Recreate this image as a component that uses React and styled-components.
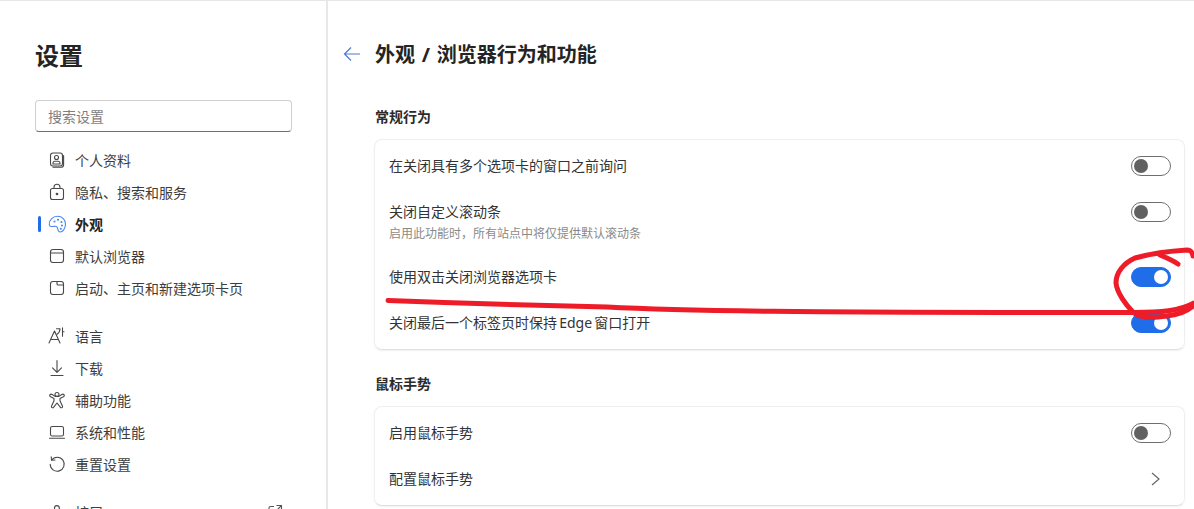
import React from "react";
import styled, { createGlobalStyle } from "styled-components";

const GlobalStyle = createGlobalStyle`
  html, body {
    margin: 0;
    height: 100%;
    overflow: hidden;
    background: #fff;
  }
  body {
    font-family: "Noto Sans", "Noto Sans CJK SC", sans-serif;
    color: #262626;
  }
`;

const Page = styled.div`
  position: relative;
  display: flex;
  height: 509px;
  overflow: hidden;
  border-top: 1px solid #e6e6e6;
  box-sizing: border-box;
`;

const Sidebar = styled.aside`
  flex: 0 0 328px;
  box-sizing: border-box;
  padding: 39px 34px 0 35px;
  border-right: 2px solid #e8e8e8;
`;

const SideTitle = styled.h1`
  margin: 0 0 28px;
  font-size: 24px;
  line-height: 32px;
  font-weight: 700;
  color: #242424;
`;

const Search = styled.input`
  display: block;
  width: 100%;
  height: 32px;
  box-sizing: border-box;
  margin-bottom: 12px;
  padding: 0 12px;
  border: 1px solid #cfcfcf;
  border-bottom-color: #6e6e6e;
  border-radius: 4px;
  outline: none;
  font: inherit;
  font-size: 14px;
  &::placeholder {
    color: #7f7f7f;
    opacity: 1;
  }
`;

const NavGroup = styled.nav`
  margin-bottom: 16px;
`;

const NavRow = styled.div`
  position: relative;
  display: flex;
  align-items: center;
  gap: 8px;
  height: 32px;
  padding-left: 12px;
  font-size: 14px;
  font-weight: ${(p) => (p.$active ? 700 : 400)};
  color: ${(p) => (p.$active ? "#242424" : "#3d3d3d")};
  svg {
    flex: none;
    color: ${(p) => (p.$active ? "#4d88ea" : "#484848")};
  }
`;

const Marker = styled.span`
  position: absolute;
  left: 3px;
  top: 8px;
  width: 3px;
  height: 16px;
  border-radius: 2px;
  background: #1f6de8;
`;

const NavTail = styled.span`
  margin-left: auto;
  margin-right: 9px;
  display: flex;
`;

const Main = styled.main`
  flex: 1;
  min-width: 0;
  padding: 39px 9px 0 15px;
`;

const Header = styled.header`
  display: flex;
  align-items: center;
  gap: 14px;
  height: 28px;
  margin-bottom: 39px;
  color: #4d78d6;
`;

const PageTitle = styled.h2`
  margin: 0;
  padding-top: 2px;
  font-size: 20px;
  line-height: 28px;
  font-weight: 700;
  word-spacing: 1.5px;
  color: #242424;
`;

const Content = styled.div`
  margin-left: 32px;
`;

const SectionTitle = styled.h3`
  margin: 0 0 12px;
  font-size: 14px;
  line-height: 20px;
  font-weight: 700;
  color: #2b2b2b;
`;

const Card = styled.section`
  box-sizing: border-box;
  margin: 0 0 24px -1px;
  padding: 3px 0;
  border: 1px solid #efefef;
  border-bottom-color: #e0e0e0;
  border-radius: 8px;
  box-shadow: 0 1px 2px rgba(0, 0, 0, 0.06);
`;

const Row = styled.div`
  display: flex;
  align-items: center;
  justify-content: space-between;
  box-sizing: border-box;
  height: 46px;
  padding: 0 13px 0 14px;
`;

const TallRow = styled(Row)`
  align-items: flex-start;
  height: 65px;
  padding-top: 13px;
`;

const RowText = styled.div`
  display: flex;
  flex-direction: column;
  gap: 4px;
`;

const Label = styled.div`
  font-size: 14px;
  line-height: 20px;
  word-spacing: -1.5px;
  color: #333;
`;

const Hint = styled.div`
  font-size: 12px;
  line-height: 16px;
  color: #8a8a8a;
`;

const Toggle = styled.span`
  display: flex;
  align-items: center;
  justify-content: ${(p) => (p.$on ? "flex-end" : "flex-start")};
  box-sizing: border-box;
  width: 40px;
  height: 20px;
  padding: 0 2px;
  border: 1px solid ${(p) => (p.$on ? "#1f6de8" : "#6e6e6e")};
  border-radius: 10px;
  background: ${(p) => (p.$on ? "#1f6de8" : "#fff")};
  &::after {
    content: "";
    width: 14px;
    height: 14px;
    border-radius: 50%;
    background: ${(p) => (p.$on ? "#fff" : "#616161")};
  }
`;

const Chevron = styled.svg`
  margin-right: 8px;
`;

const Ink = styled.svg`
  position: absolute;
  left: 0;
  top: -1px;
  pointer-events: none;
`;

const Icon = ({ children, size = 20 }) => (
  <svg
    width={size}
    height={size}
    viewBox="0 0 20 20"
    fill="none"
    stroke="currentColor"
    strokeWidth="1.1"
    strokeLinecap="round"
    strokeLinejoin="round"
  >
    {children}
  </svg>
);

const icons = {
  profile: (
    <>
      <rect x="3.5" y="3" width="12" height="13" rx="2.5" />
      <path d="M16.6 5.5v9.2a2.6 2.6 0 0 1-2.6 2.6H6" />
      <circle cx="9.5" cy="7.5" r="2" />
      <path d="M6 13.2c0-1.4 1-2 2-2h3c1 0 2 .6 2 2v.8H6z" />
    </>
  ),
  lock: (
    <>
      <rect x="3.5" y="6.5" width="13" height="11" rx="2" />
      <path d="M7 6.5V5.2a3 3 0 0 1 6 0v1.3" />
      <circle cx="10" cy="12" r=".8" fill="currentColor" />
    </>
  ),
  palette: (
    <>
      <path d="M2.2 10.500C2 6.200 5.600 2.300 10.500 2.300c4.800 0 8 3.400 8 7.700 0 4.400-2.700 8-5.200 8-1.900 0-2.400-1.500-2.600-3.200-.2-1.800-1-2.700-2.800-2.500-2.500.3-5.500.9-5.700-1.800z" />
      <circle cx="7.500" cy="7.500" r=".5" fill="currentColor" />
      <circle cx="11" cy="5.800" r=".5" fill="currentColor" />
      <circle cx="14.500" cy="8" r=".5" fill="currentColor" />
      <circle cx="15" cy="11.500" r=".5" fill="currentColor" />
      <circle cx="13.800" cy="14.800" r=".5" fill="currentColor" />
    </>
  ),
  window: (
    <>
      <rect x="3.5" y="3.5" width="13" height="13" rx="2.5" />
      <path d="M3.5 7h13" />
    </>
  ),
  tab: (
    <>
      <rect x="3.5" y="3.5" width="13" height="13" rx="2.5" />
      <path d="M10 3.5v2.2c0 .8.5 1.3 1.3 1.3h5.2" />
    </>
  ),
  language: (
    <>
      <path d="M2 17 7.500 5 13 17M3.800 13.500h7.400" />
      <path d="M9.500 2.800h3.500c0 2.600-1 4.200-3 5.400M15.500 1.800v8.400M15.500 5.800h1.500" />
    </>
  ),
  download: <path d="M10 2.500V14M5.500 9.800 10 14.300l4.500-4.500M4 17.500h12" />,
  access: (
    <>
      <circle cx="10" cy="4.500" r="2" />
      <path d="M3.200 4.500c-.8.8-.5 1.800.4 2.300L7 8.500v2.200L4.600 16c-.4 1 .1 1.700.9 1.800.6.1 1.100-.3 1.400-.9L10 13l3.100 3.900c.3.600.8 1 1.400.9.8-.1 1.300-.8.9-1.800L13 10.700V8.500l3.400-1.700c.9-.5 1.200-1.500.4-2.300-.6-.6-1.400-.4-2 0L12 6.400H8L5.200 4.500c-.6-.4-1.400-.6-2 0z" />
    </>
  ),
  laptop: (
    <>
      <rect x="3.500" y="4.500" width="13" height="9.500" rx="1.800" />
      <path d="M2.500 16.300h15" />
    </>
  ),
  reset: (
    <>
      <path d="M4.600 6a7 7 0 1 1-1.400 4.200" />
      <path d="M4.200 2.800 4.600 6.200 8 6" />
    </>
  ),
  puzzle: <path d="M4 8h3.500V6a2.400 2.400 0 1 1 4.800 0v2H16v9H4z" />,
};

const ExternalIcon = () => (
  <svg width="16" height="16" viewBox="0 0 16 16" fill="none" stroke="#555" strokeWidth="1.1">
    <path d="M7 2.500H3.500a1.500 1.500 0 0 0-1.500 1.500v8.500a1.500 1.500 0 0 0 1.500 1.500H12a1.500 1.500 0 0 0 1.500-1.500V9M9.500 1.500h5v5M14.500 1.500 8 8" />
  </svg>
);

const navGroups = [
  [
    ["profile", "个人资料"],
    ["lock", "隐私、搜索和服务"],
    ["palette", "外观", true],
    ["window", "默认浏览器"],
    ["tab", "启动、主页和新建选项卡页"],
  ],
  [
    ["language", "语言"],
    ["download", "下载"],
    ["access", "辅助功能"],
    ["laptop", "系统和性能"],
    ["reset", "重置设置"],
  ],
];

const App = () => {
  return (
    <Page>
      <GlobalStyle />
      <Sidebar>
        <SideTitle>设置</SideTitle>
        <Search placeholder="搜索设置" />
        {navGroups.map((group, i) => (
          <NavGroup key={i}>
            {group.map(([icon, text, active]) => (
              <NavRow key={text} $active={active}>
                {active && <Marker />}
                <Icon>{icons[icon]}</Icon>
                {text}
              </NavRow>
            ))}
          </NavGroup>
        ))}
        <NavRow>
          <Icon>{icons.puzzle}</Icon>
          扩展
          <NavTail>
            <ExternalIcon />
          </NavTail>
        </NavRow>
      </Sidebar>

      <Main>
        <Header>
          <svg width="18" height="18" viewBox="0 0 18 18" fill="none" stroke="currentColor" strokeWidth="1.2">
            <path d="M17 9H1.500M8 2.500 1.500 9 8 15.500" />
          </svg>
          <PageTitle>外观 / 浏览器行为和功能</PageTitle>
        </Header>
        <Content>
          <SectionTitle>常规行为</SectionTitle>
          <Card>
            <Row>
              <Label>在关闭具有多个选项卡的窗口之前询问</Label>
              <Toggle />
            </Row>
            <TallRow>
              <RowText>
                <Label>关闭自定义滚动条</Label>
                <Hint>启用此功能时，所有站点中将仅提供默认滚动条</Hint>
              </RowText>
              <Toggle />
            </TallRow>
            <Row>
              <Label>使用双击关闭浏览器选项卡</Label>
              <Toggle $on />
            </Row>
            <Row>
              <Label>关闭最后一个标签页时保持 Edge 窗口打开</Label>
              <Toggle $on />
            </Row>
          </Card>
          <SectionTitle>鼠标手势</SectionTitle>
          <Card>
            <Row>
              <Label>启用鼠标手势</Label>
              <Toggle />
            </Row>
            <Row>
              <Label>配置鼠标手势</Label>
              <Chevron width="16" height="16" viewBox="0 0 16 16" fill="none" stroke="#666" strokeWidth="1.2">
                <path d="M5 2 12 8 5 14" />
              </Chevron>
            </Row>
          </Card>
        </Content>
      </Main>

      <Ink width="1194" height="509" viewBox="0 0 1194 509" fill="none" stroke="#ed1c28" strokeWidth="5" strokeLinecap="round" strokeLinejoin="round">
        <path d="M388 300.500C480 304 560 306 607 307C680 311 800 312.500 1134 312.500C1160 312.500 1180 311 1194 303" />
        <path d="M1178 264C1172 260 1166 257.500 1160 255" />
        <path d="M1193 256C1192 251 1190 250 1187 250C1170 251 1150 254 1135 258C1124 263 1116 272 1116 283C1117 293 1126 305 1133 312C1140 318 1150 318.500 1167 316C1178 314.500 1188 311 1194 305" />
      </Ink>
    </Page>
  );
};

export default App;
